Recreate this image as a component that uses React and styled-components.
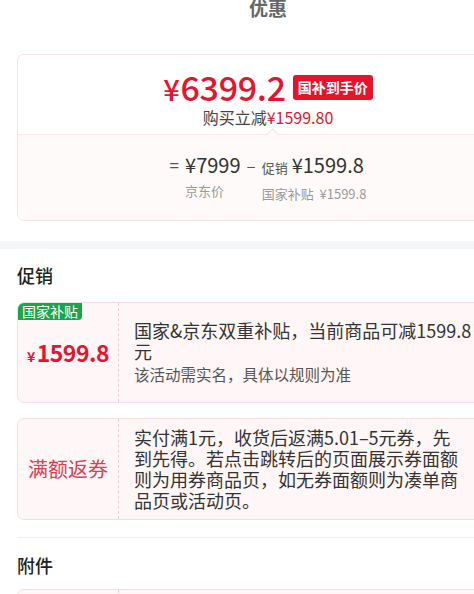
import React from "react";
import styled, { createGlobalStyle } from "styled-components";

const GlobalStyle = createGlobalStyle`
  html, body {
    margin: 0;
    padding: 0;
    background: #fff;
    overflow: hidden;
  }
  body {
    font-family: "Noto Sans CJK SC", "Noto Sans", sans-serif;
    color: #333;
  }
`;

const promos = [
  {
    id: 1,
    tag: "国家补贴",
    price: "1599.8",
    lines: ["国家&京东双重补贴，当前商品可减1599.8元"],
    note: "该活动需实名，具体以规则为准",
    textWidth: 352,
  },
  {
    id: 2,
    title: "满额返券",
    lines: [
      "实付满1元，收货后返满5.01–5元券，先到先得。若点击跳转后的页面展示券面额则为用券商品页，如无券面额则为凑单商品页或活动页。",
    ],
    textWidth: 330,
  },
];

const App = () => {
  return (
    <Page>
      <GlobalStyle />
      <Header>优惠</Header>

      <Section>
        <PriceCard>
          <Upper>
            <PriceRow>
              <BigPrice>
                <small>¥</small>6399.2
              </BigPrice>
              <RedBadge>国补到手价</RedBadge>
            </PriceRow>
            <SaveLine>
              购买立减<em>¥1599.80</em>
            </SaveLine>
          </Upper>
          <Lower>
            <Formula>
              <Op>=</Op>
              <Term>
                <TermValue>¥7999</TermValue>
                <TermLabel>京东价</TermLabel>
              </Term>
              <Op>–</Op>
              <Term>
                <TermValue>
                  <span>促销</span>¥1599.8
                </TermValue>
                <TermLabel>国家补贴&nbsp;&nbsp;¥1599.8</TermLabel>
              </Term>
            </Formula>
          </Lower>
        </PriceCard>
      </Section>

      <Band />

      <Section>
        <Heading>促销</Heading>
        <CardList>
          {promos.map((p) => (
            <PromoCard key={p.id}>
              <PromoLeft>
                {p.tag && <GreenTag>{p.tag}</GreenTag>}
                {p.price ? (
                  <PromoPrice>
                    <small>¥</small>
                    {p.price}
                  </PromoPrice>
                ) : (
                  <PromoTitle>{p.title}</PromoTitle>
                )}
              </PromoLeft>
              <PromoBody>
                <PromoText $width={p.textWidth}>
                  {p.lines.join("")}
                </PromoText>
                {p.note && <PromoNote>{p.note}</PromoNote>}
              </PromoBody>
            </PromoCard>
          ))}
        </CardList>
      </Section>

      <Section>
        <Divider />
        <Heading $top={16}>附件</Heading>
        <CardList $top={13}>
          <PromoCard>
            <PromoLeft />
            <PromoBody />
          </PromoCard>
        </CardList>
      </Section>
    </Page>
  );
};

const Page = styled.div`
  width: 536px;
  background: #fff;
`;

const Header = styled.div`
  height: 16px;
  line-height: 16px;
  margin-bottom: 38px;
  text-align: center;
  font-size: 19px;
  font-weight: 700;
  color: #666;
`;

const Section = styled.div`
  padding: 0 17px;
`;

const PriceCard = styled.div`
  border: 1px solid #f6e1e4;
  border-radius: 7px;
  overflow: hidden;
`;

const Upper = styled.div`
  height: 79px;
  padding-top: 14px;
  box-sizing: border-box;
  display: flex;
  flex-direction: column;
  align-items: center;
  background: #fff;
`;

const PriceRow = styled.div`
  display: flex;
  align-items: center;
  gap: 7px;
  height: 36px;
`;

const BigPrice = styled.div`
  font-size: 34px;
  line-height: 34px;
  font-weight: 500;
  color: #e6142d;
  letter-spacing: -0.3px;

  small {
    font-size: 29px;
    margin-right: 1px;
  }
`;

const RedBadge = styled.span`
  background: #e8132b;
  color: #fff;
  font-size: 14px;
  font-weight: 700;
  line-height: 25px;
  padding: 0 5px;
  border-radius: 3px;
  margin-top: 1px;
`;

const SaveLine = styled.div`
  margin-top: 3px;
  font-size: 16px;
  line-height: 18px;
  color: #444;

  em {
    font-style: normal;
    color: #e6142d;
  }
`;

const Lower = styled.div`
  position: relative;
  height: 86px;
  padding-top: 17px;
  box-sizing: border-box;
  background: #fffafa;
  border-top: 1px solid #f8e8ea;

  &::before {
    content: "";
    position: absolute;
    left: 250px;
    top: -5px;
    width: 8px;
    height: 8px;
    background: #fffafa;
    border-left: 1px solid #f6e1e4;
    border-top: 1px solid #f6e1e4;
    transform: rotate(45deg);
  }
`;

const Formula = styled.div`
  display: flex;
  justify-content: center;
  align-items: flex-start;
  gap: 6px;
`;

const Op = styled.span`
  font-size: 17px;
  line-height: 26px;
  color: #555;
`;

const Term = styled.div`
  display: flex;
  flex-direction: column;
  gap: 4px;
`;

const TermValue = styled.div`
  font-size: 20px;
  line-height: 26px;
  color: #333;
  white-space: nowrap;

  span {
    font-size: 13px;
    color: #555;
    margin-right: 4px;
  }
`;

const TermLabel = styled.div`
  font-size: 13px;
  line-height: 18px;
  color: #999;
  white-space: nowrap;
`;

const Band = styled.div`
  height: 8px;
  margin-top: 20px;
  background: #f5f6f8;
`;

const Heading = styled.div`
  padding-top: ${(p) => p.$top || 15}px;
  font-size: 18px;
  line-height: 22px;
  font-weight: 500;
  color: #222;
`;

const CardList = styled.div`
  margin-top: ${(p) => p.$top || 16}px;
  display: flex;
  flex-direction: column;
  gap: 15px;
`;

const PromoCard = styled.div`
  display: flex;
  min-height: 101px;
  background: #fff6f7;
  border: 1px solid #f7dde2;
  border-radius: 7px;
  box-sizing: border-box;
  overflow: hidden;
`;

const PromoLeft = styled.div`
  position: relative;
  width: 100px;
  flex-shrink: 0;
  display: flex;
  align-items: center;
  justify-content: center;
  border-right: 1px dashed #e6cfd3;
`;

const GreenTag = styled.span`
  position: absolute;
  left: 0;
  top: 0;
  background: #19a64a;
  color: #fff;
  font-size: 14px;
  line-height: 17px;
  padding: 0 4px;
  border-bottom-right-radius: 4px;
`;

const PromoPrice = styled.div`
  font-size: 23px;
  font-weight: 700;
  color: #e6142d;
  line-height: 28px;
  margin-top: 2px;
  letter-spacing: -0.5px;

  small {
    font-size: 14px;
    margin-right: 2px;
  }
`;

const PromoTitle = styled.div`
  font-size: 20px;
  color: #e23b50;
  line-height: 26px;
`;

const PromoBody = styled.div`
  padding: 8px 0 8px 15px;
  display: flex;
  flex-direction: column;
  justify-content: center;
`;

const PromoText = styled.div`
  width: ${(p) => p.$width}px;
  font-size: 18px;
  line-height: 21px;
  color: #333;
`;

const PromoNote = styled.div`
  margin-top: 2px;
  font-size: 15.5px;
  line-height: 21px;
  color: #555;
`;

const Divider = styled.div`
  margin-top: 17px;
  height: 1px;
  background: #eeeeee;
`;

export default App;
